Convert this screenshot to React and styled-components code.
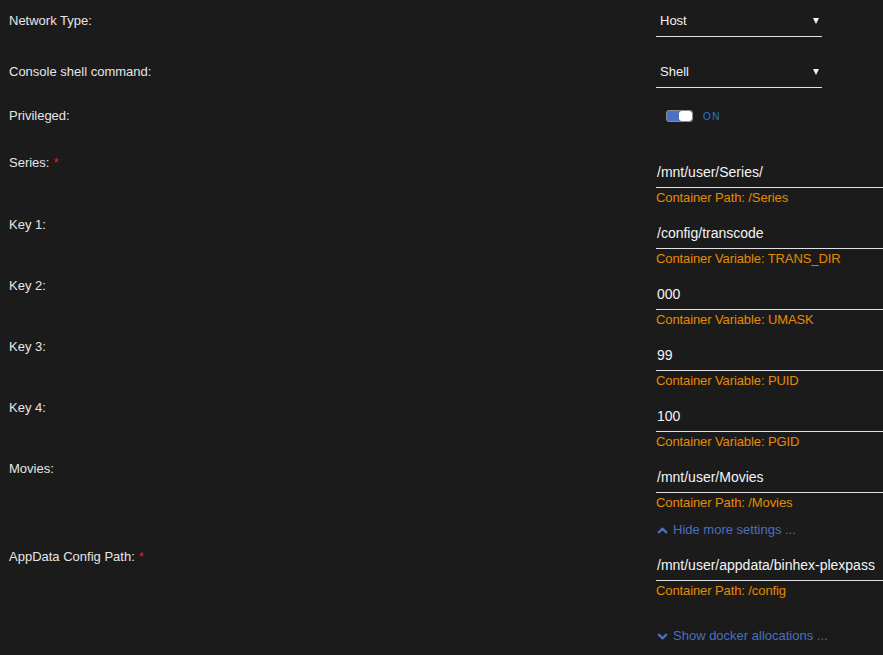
import React from 'react'
import styled, { createGlobalStyle } from 'styled-components'
import { ChevronUp, ChevronDown } from 'lucide-react'

const GlobalStyle = createGlobalStyle`
    html, body {
        margin: 0;
        padding: 0;
        background: #1c1b1c;
        overflow: hidden;
    }
    body {
        font-family: "Liberation Sans", Arial, sans-serif;
        font-size: 13px;
        color: #e4e4e4;
    }
`

const Page = styled.div`
    width: 883px;
    height: 655px;
    display: flex;
    flex-direction: column;
    background: #1c1b1c;
    overflow: hidden;
`

const Form = styled.div`
    display: flex;
    flex-direction: column;
    padding-top: 13px;
`

const Row = styled.div`
    display: grid;
    grid-template-columns: 656px 1fr;
    margin-top: ${p => p.$top || 0}px;
`

const Label = styled.div`
    padding-left: 9px;
    line-height: 16px;
    color: #e6e6e6;
`

const Required = styled.span`
    color: #e0201c;
    margin-left: 4px;
`

const Value = styled.div`
    display: flex;
    flex-direction: column;
    align-items: flex-start;
    padding-top: ${p => p.$pad || 0}px;
    min-width: 0;
`

const Select = styled.div`
    position: relative;
    width: 166px;
    box-sizing: border-box;
    padding: 0 4px 7px;
    line-height: 16px;
    color: #f2f2f2;
    border-bottom: 1px solid #e2e2e2;

    &::after {
        content: '';
        position: absolute;
        right: 3px;
        top: 5px;
        border-left: 3px solid transparent;
        border-right: 3px solid transparent;
        border-top: 6px solid #f2f2f2;
    }
`

const Input = styled.div`
    width: 260px;
    box-sizing: border-box;
    padding: 0 0 7px 1px;
    font-size: 14px;
    line-height: 16px;
    color: #f4f4f4;
    white-space: nowrap;
    border-bottom: 1px solid #e2e2e2;
`

const Note = styled.div`
    margin-top: 2px;
    line-height: 16px;
    letter-spacing: -0.1px;
    color: #e68a00;
    white-space: nowrap;
`

const ToggleWrap = styled.div`
    display: flex;
    align-items: center;
    gap: 10px;
    padding-left: 10px;
    height: 16px;
`

const Toggle = styled.div`
    position: relative;
    width: 27px;
    height: 12px;
    box-sizing: border-box;
    border: 1px solid #8e8e8e;
    border-radius: 3px;
    background: #4c70c2;
    overflow: hidden;

    &::after {
        content: '';
        position: absolute;
        right: 0;
        top: 0;
        width: 13px;
        height: 10px;
        border-radius: 3px;
        background: #fff;
    }
`

const ToggleText = styled.span`
    font-size: 10px;
    letter-spacing: 1.5px;
    color: #1d7ad4;
`

const MoreLink = styled.div`
    display: flex;
    align-items: center;
    gap: 3px;
    line-height: 16px;
    color: #4a6fc0;
    margin-top: ${p => p.$top || 0}px;
    padding-left: 655px;
`

const Footer = styled.div`
    flex: 1;
    margin-top: 6px;
    padding-top: 22px;
    background: #1a1a1a;
    border-top: 1px solid #1e1e1e;
`

const paths = [
    { label: 'Key 1:', value: '/config/transcode', note: 'Container Variable: TRANS_DIR' },
    { label: 'Key 2:', value: '000', note: 'Container Variable: UMASK' },
    { label: 'Key 3:', value: '99', note: 'Container Variable: PUID' },
    { label: 'Key 4:', value: '100', note: 'Container Variable: PGID' },
    { label: 'Movies:', value: '/mnt/user/Movies', note: 'Container Path: /Movies' },
]

const App = () => {
    return (
        <Page>
            <GlobalStyle />
            <Form>
                <Row>
                    <Label>Network Type:</Label>
                    <Value><Select>Host</Select></Value>
                </Row>
                <Row $top={27}>
                    <Label>Console shell command:</Label>
                    <Value><Select>Shell</Select></Value>
                </Row>
                <Row $top={20}>
                    <Label>Privileged:</Label>
                    <Value>
                        <ToggleWrap>
                            <Toggle />
                            <ToggleText>ON</ToggleText>
                        </ToggleWrap>
                    </Value>
                </Row>
                <Row $top={31}>
                    <Label>Series:<Required>*</Required></Label>
                    <Value $pad={9}>
                        <Input>/mnt/user/Series/</Input>
                        <Note>Container Path: /Series</Note>
                    </Value>
                </Row>
                {paths.map(p => (
                    <Row key={p.label} $top={11}>
                        <Label>{p.label}</Label>
                        <Value $pad={8}>
                            <Input>{p.value}</Input>
                            <Note>{p.note}</Note>
                        </Value>
                    </Row>
                ))}
                <MoreLink $top={11}>
                    <ChevronUp size={15} strokeWidth={3.6} />
                    Hide more settings ...
                </MoreLink>
                <Row $top={11}>
                    <Label>AppData Config Path:<Required>*</Required></Label>
                    <Value $pad={8}>
                        <Input>/mnt/user/appdata/binhex-plexpass</Input>
                        <Note>Container Path: /config</Note>
                    </Value>
                </Row>
            </Form>
            <Footer>
                <MoreLink>
                    <ChevronDown size={15} strokeWidth={3.6} />
                    Show docker allocations ...
                </MoreLink>
            </Footer>
        </Page>
    )
}

export default App
